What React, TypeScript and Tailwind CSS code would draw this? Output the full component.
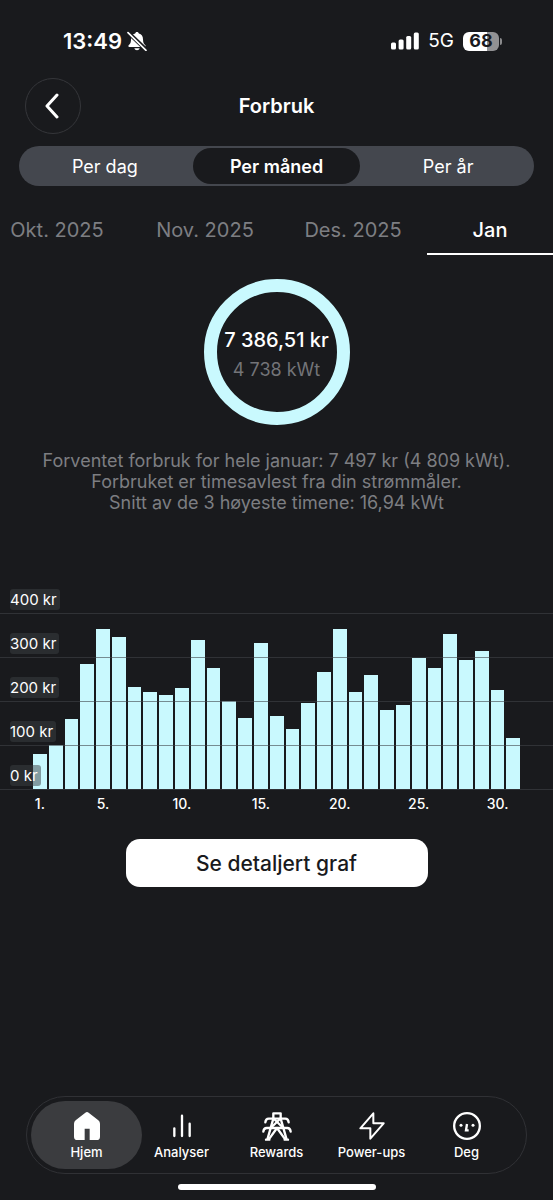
import React from "react";

const days = [
  80, 99, 159, 283, 363, 345, 231, 220, 214, 229, 339, 274, 201, 162, 332, 166,
  136, 196, 266, 364, 220, 258, 180, 191, 297, 274, 353, 293, 313, 225, 115,
];
const ticks = [400, 300, 200, 100, 0];
const months = ["Okt. 2025", "Nov. 2025", "Des. 2025"];

function StatusBar() {
  return (
    <div className="flex h-[66px] items-end justify-between pr-[51px] pl-[63px] pb-3 text-white">
      <div className="flex items-center gap-[5px]">
        <span className="text-[22px] leading-[26px] font-semibold">13:49</span>
        <svg width="20" height="20" viewBox="0 0 60 60" aria-hidden="true">
          <path
            d="M30 3c-3 0-5 2-5.500 4.500C16 10 12 16 12 25c0 11-3 14-7 18-2 2-1 5 2 5h46c3 0 4-3 2-5-4-4-7-7-7-18 0-9-4-15-12.500-17.500C35 5 33 3 30 3z"
            fill="#fff"
          />
          <path d="M22 52h16c-1 4-4 6-8 6s-7-2-8-6z" fill="#fff" />
          <path d="M4 5l54 52" stroke="#191a1d" strokeWidth="12" />
          <path d="M3 5l54 53" stroke="#fff" strokeWidth="5" strokeLinecap="round" />
        </svg>
      </div>
      <div className="flex h-[26px] items-center">
        <svg width="28" height="18" viewBox="0 0 28 18" fill="#fff" aria-hidden="true">
          <rect x="0" y="10.500" width="5" height="7" rx="1.500" />
          <rect x="7.600" y="7.500" width="5" height="10" rx="1.500" />
          <rect x="15.200" y="4" width="5" height="13.500" rx="1.500" />
          <rect x="22.800" y="0.500" width="5" height="17" rx="1.500" />
        </svg>
        <span className="ml-[9px] text-[19px] leading-[26px]">5G</span>
        <span className="ml-[9px] flex h-[19px] w-[36px] items-center justify-center rounded-[6px] bg-linear-to-r from-white from-68% to-[#919193] to-68% text-[18px] leading-[18px] font-bold text-[#191a1d]">
          68
        </span>
        <span className="ml-px h-[7px] w-[2px] rounded-r-full bg-[#8a8a8c]" />
      </div>
    </div>
  );
}

function Chart() {
  return (
    <section aria-label="Forbruk per dag" className="mt-[57px]">
      <div className="grid">
        <div className="col-start-1 row-start-1 flex items-end gap-[2px] pr-[33px] pl-[33px] pb-px">
          {days.map((kr, i) => (
            <div
              key={i}
              className="min-w-0 flex-1 bg-[#c9f9fe]"
              style={{ height: `${kr * 0.44}px` }}
            />
          ))}
        </div>
        <div className="col-start-1 row-start-1">
          {ticks.map((t) => (
            <div
              key={t}
              className="flex h-[44px] items-end border-b border-[#3f4248]/60 pb-[3px] pl-[10px]"
            >
              <span className="rounded-[3px] bg-[#3c3f44]/50 pr-[3px] text-[15px] leading-[21px] text-white">
                {t} kr
              </span>
            </div>
          ))}
        </div>
      </div>
      <div className="mt-1 flex gap-[2px] pr-[33px] pl-[33px]">
        {days.map((_, i) => (
          <span
            key={i}
            className="flex h-5 min-w-0 flex-1 justify-center text-[14px] leading-5 font-medium whitespace-nowrap text-white"
          >
            {i === 0 || (i + 1) % 5 === 0 ? `${i + 1}.` : ""}
          </span>
        ))}
      </div>
    </section>
  );
}

function HomeIcon() {
  return (
    <svg width="26" height="28" viewBox="0 0 78 84" fill="#fff" aria-hidden="true">
      <path d="M34 2q5-4 10 0l29 23q5 4 5 10v39q0 10-10 10H47V50H32v34H10Q0 84 0 74V35q0-6 5-10z" />
    </svg>
  );
}

function BarsIcon() {
  return (
    <svg width="20" height="24" viewBox="0 0 60 72" fill="none" stroke="#fff" strokeWidth="7" strokeLinecap="round" aria-hidden="true">
      <path d="M7 43v23M30 5v61M53 29v37" />
    </svg>
  );
}

function PylonIcon() {
  return (
    <svg width="30" height="29" viewBox="36 36 90 87" fill="none" stroke="#fff" strokeWidth="7" strokeLinecap="round" strokeLinejoin="round" aria-hidden="true">
      <path d="M70 56V40h22v16" />
      <path d="M46 67q1-11 10-11h50q9 0 10 11" />
      <path d="M40 95q1-11 10-11h62q9 0 10 11" />
      <path d="M70 56L52 119M92 56l18 63M48 119h10M104 119h10" />
      <path d="M72 57l28 27M90 57L62 84M58 116l23-32 23 32" />
    </svg>
  );
}

function BoltIcon() {
  return (
    <svg width="26" height="28" viewBox="0 0 78 84" fill="none" stroke="#fff" strokeWidth="6" strokeLinejoin="round" aria-hidden="true">
      <path d="M43 4L4 49h30v31l40-46H43z" />
    </svg>
  );
}

function FaceIcon() {
  return (
    <svg width="28" height="28" viewBox="0 0 84 84" fill="none" stroke="#fff" aria-hidden="true">
      <circle cx="42" cy="42" r="38.500" strokeWidth="7" />
      <circle cx="24" cy="40" r="4.500" fill="#fff" stroke="none" />
      <circle cx="60" cy="40" r="4.500" fill="#fff" stroke="none" />
      <path d="M42 36l-3 19h8" strokeWidth="7" />
    </svg>
  );
}

const nav = [
  { label: "Hjem", icon: <HomeIcon />, active: true },
  { label: "Analyser", icon: <BarsIcon /> },
  { label: "Rewards", icon: <PylonIcon /> },
  { label: "Power-ups", icon: <BoltIcon /> },
  { label: "Deg", icon: <FaceIcon /> },
];

export default function App() {
  return (
    <div className="flex min-h-screen flex-col overflow-x-hidden bg-[#191a1d] font-['Inter',sans-serif] text-white">
      <StatusBar />

      <header className="mt-3 grid grid-cols-[1fr_auto_1fr] items-center px-[25px]">
        <button
          aria-label="Tilbake"
          className="flex size-[56px] items-center justify-center rounded-full border border-[#35363a]"
        >
          <svg width="16" height="26" viewBox="0 0 16 26" fill="none" stroke="#fff" strokeWidth="3" strokeLinecap="round" strokeLinejoin="round" aria-hidden="true">
            <path d="M12 2L2 13l10 11" />
          </svg>
        </button>
        <h1 className="text-[20px] leading-7 font-semibold">Forbruk</h1>
      </header>

      <div className="mx-[19px] mt-3 grid h-10 grid-cols-3 gap-1 rounded-full bg-[#44474e] p-[2px] text-[18px]">
        <button className="rounded-full">Per dag</button>
        <button className="rounded-full bg-[#191a1d] font-semibold">Per måned</button>
        <button className="rounded-full">Per år</button>
      </div>

      <div className="mt-[18px] flex justify-end overflow-hidden text-[20px]">
        {months.map((m) => (
          <button key={m} className="h-[51px] w-[148px] shrink-0 text-[#7d7e82]">
            {m}
          </button>
        ))}
        <button className="h-[51px] w-[126px] shrink-0 border-b-2 border-white pt-[2px] font-medium">
          Jan
        </button>
      </div>

      <div className="mx-auto mt-[24px] flex size-[146px] flex-col items-center justify-center rounded-full border-[13px] border-[#c9f9fe] pt-[6px] whitespace-nowrap">
        <p className="text-[20px] leading-[30px] font-medium">7 386,51 kr</p>
        <p className="text-[18px] leading-[30px] text-[#737478]">4 738 kWt</p>
      </div>

      <p className="mt-[25px] px-4 text-center text-[18px] leading-[21px] text-[#7d7e82]">
        Forventet forbruk for hele januar: 7 497 kr (4 809 kWt).
        <br />
        Forbruket er timesavlest fra din strømmåler.
        <br />
        Snitt av de 3 høyeste timene: 16,94 kWt
      </p>

      <Chart />

      <button className="mx-auto mt-[25px] h-[48px] w-[302px] rounded-[14px] bg-white pt-[2px] text-[21px] font-medium text-[#191a1d]">
        Se detaljert graf
      </button>

      <nav className="mx-[26px] mt-auto grid h-[78px] grid-cols-5 rounded-full border border-[#303135] px-[12px] py-1">
        {nav.map((n) => (
          <a
            key={n.label}
            href="#"
            aria-current={n.active ? "page" : undefined}
            className={
              "-mx-2 flex flex-col items-center rounded-full pt-[10px] text-[13px] leading-4 font-medium " +
              (n.active ? "bg-[#3b3c3f]" : "")
            }
          >
            <span className="flex h-[30px] items-center">{n.icon}</span>
            <span className="mt-[3px]">{n.label}</span>
          </a>
        ))}
      </nav>
      <div className="mx-auto mt-[10px] mb-[10px] h-[6px] w-[198px] rounded-full bg-white" />
    </div>
  );
}
